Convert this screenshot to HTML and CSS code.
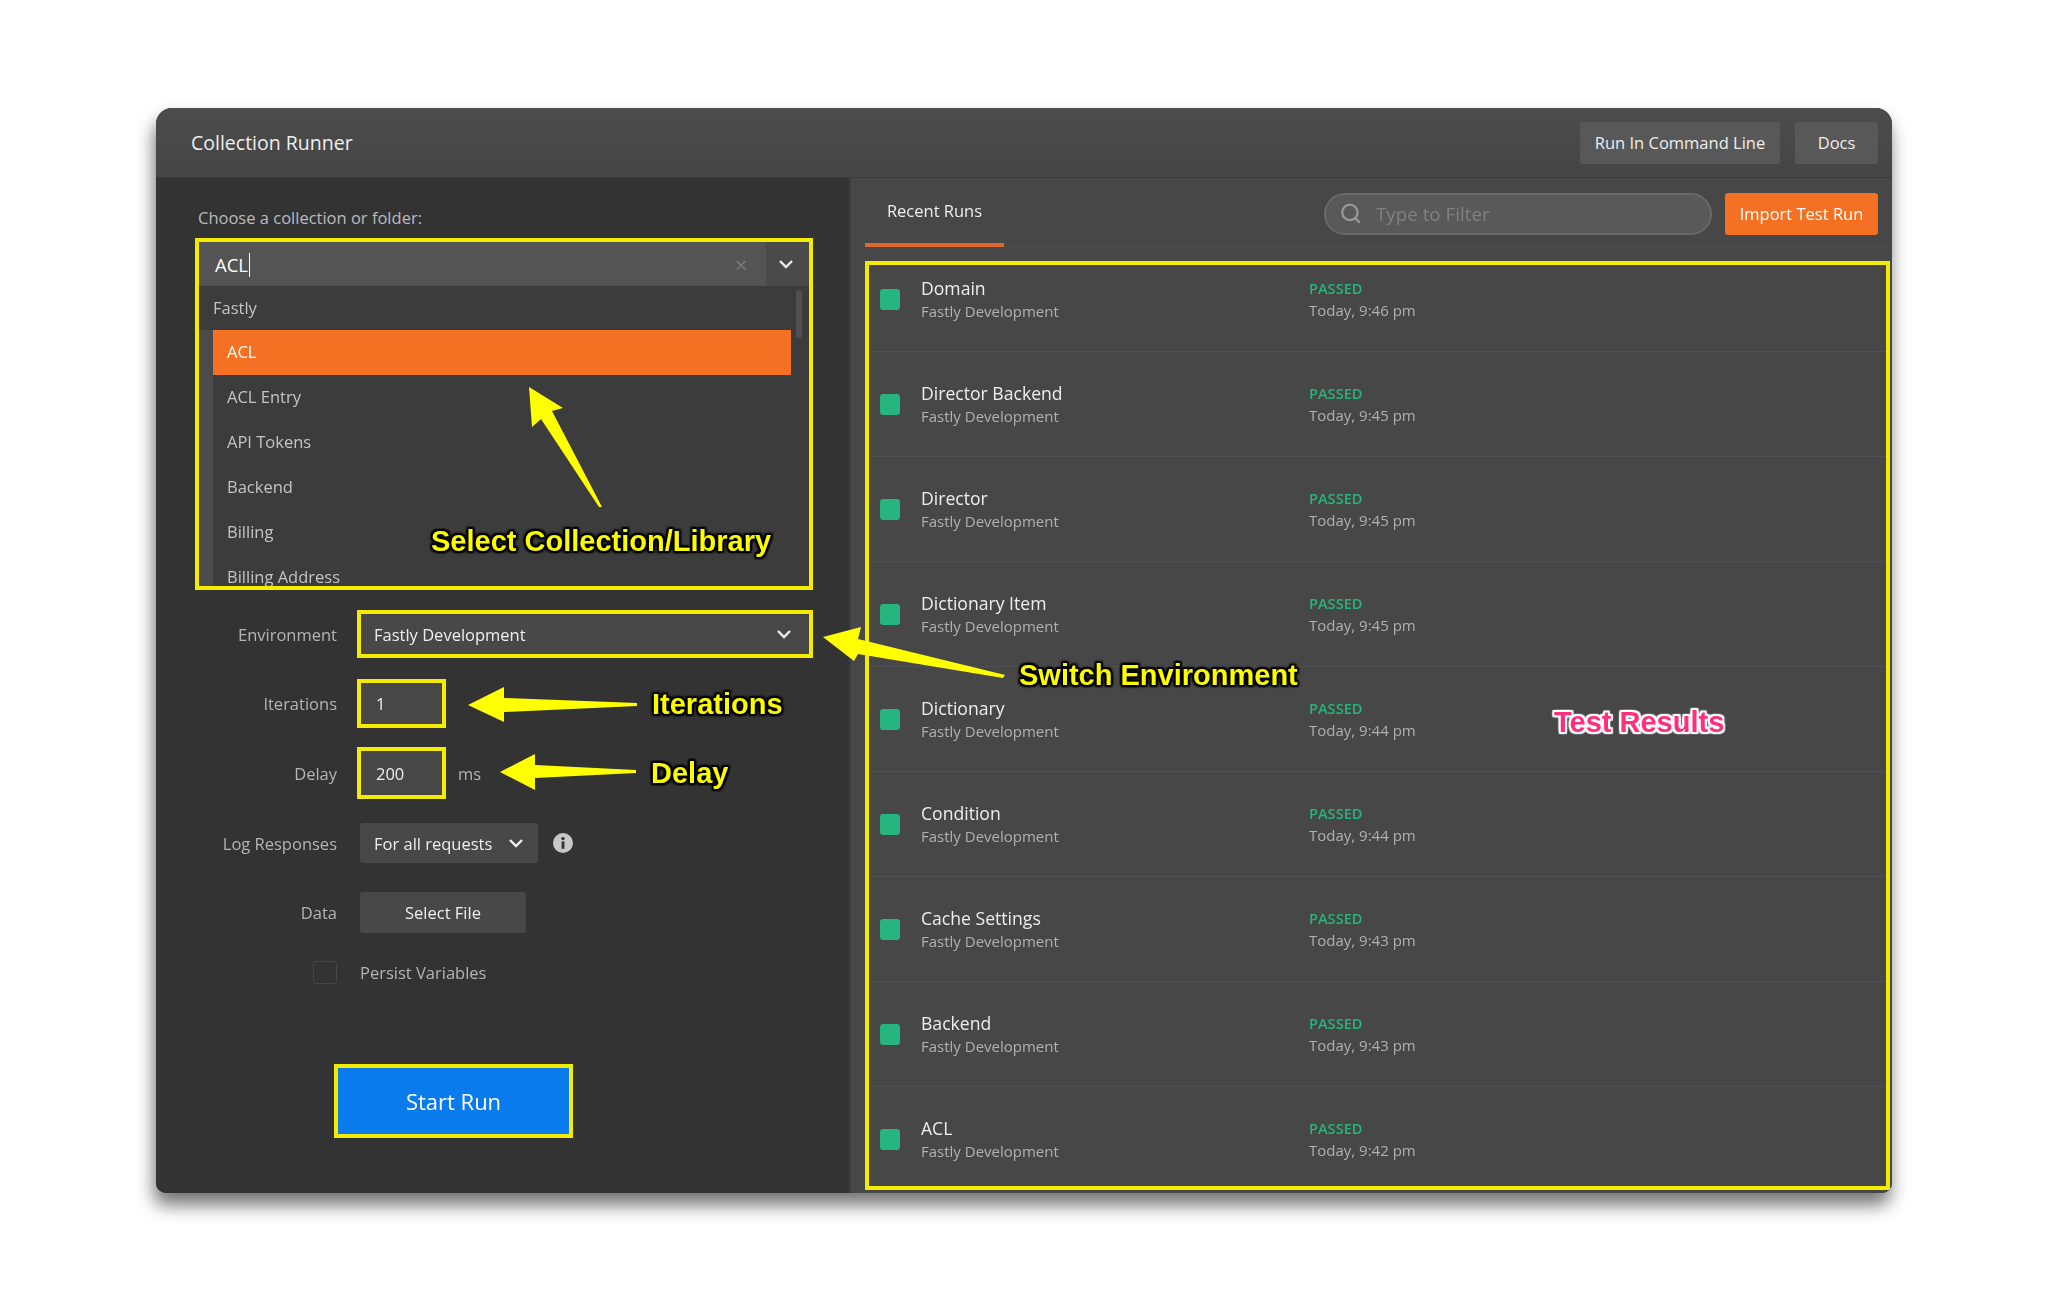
FILE: index.html
```html
<!DOCTYPE html>
<html lang="en">
<head>
    <meta charset="UTF-8">
    <meta name="viewport" content="width=device-width, initial-scale=1.0">
    <title>Collection Runner</title>
    <link rel="stylesheet" href="styles.css">
</head>
<body>

    <div class="window">
        <div class="titlebar">
            <span class="title">Collection Runner</span>
            <div class="title-actions">
                <button class="btn btn-cmd">Run In Command Line</button>
                <button class="btn btn-docs">Docs</button>
            </div>
        </div>

        <div class="panes">
            <div class="left-pane">
                <p class="choose-label">Choose a collection or folder:</p>

                <div class="picker hl">
                    <div class="picker-input">
                        <span class="picker-value">ACL</span>
                        <span class="picker-clear">&times;</span>
                        <span class="picker-toggle">
                            <svg class="chevron" viewBox="0 0 16 10"><path d="M2 2l6 6 6-6"/></svg>
                        </span>
                    </div>
                    <div class="picker-list">
                        <div class="picker-group">Fastly</div>
                        <div class="picker-items">
                            <div class="picker-item active">ACL</div>
                            <div class="picker-item">ACL Entry</div>
                            <div class="picker-item">API Tokens</div>
                            <div class="picker-item">Backend</div>
                            <div class="picker-item">Billing</div>
                            <div class="picker-item">Billing Address</div>
                        </div>
                        <div class="picker-scroll"></div>
                    </div>
                </div>

                <div class="form">
                    <div class="form-row row-env">
                        <label>Environment</label>
                        <div class="env-select hl">
                            <span>Fastly Development</span>
                            <svg class="chevron" viewBox="0 0 16 10"><path d="M2 2l6 6 6-6"/></svg>
                        </div>
                    </div>
                    <div class="form-row row-iter">
                        <label>Iterations</label>
                        <div class="num-input hl">1</div>
                    </div>
                    <div class="form-row row-delay">
                        <label>Delay</label>
                        <div class="num-input hl">200</div>
                        <span class="unit">ms</span>
                    </div>
                    <div class="form-row row-log">
                        <label>Log Responses</label>
                        <div class="log-select">
                            <span>For all requests</span>
                            <svg class="chevron" viewBox="0 0 16 10"><path d="M2 2l6 6 6-6"/></svg>
                        </div>
                        <svg class="info" viewBox="0 0 20 20">
                            <circle cx="10" cy="10" r="10" fill="#c8c8c8"/>
                            <rect x="8.6" y="8.4" width="2.8" height="7.4" fill="#333"/>
                            <circle cx="10" cy="5.6" r="1.7" fill="#333"/>
                        </svg>
                    </div>
                    <div class="form-row row-data">
                        <label>Data</label>
                        <button class="btn select-file">Select File</button>
                    </div>
                    <div class="form-row row-persist">
                        <label><span class="checkbox"></span></label>
                        <span class="persist-text">Persist Variables</span>
                    </div>
                </div>

                <button class="start-run">Start Run</button>
            </div>

            <div class="right-pane">
                <div class="tabs">
                    <div class="tab">Recent Runs</div>
                    <div class="filter">
                        <svg class="search" viewBox="0 0 20 20"><circle cx="9" cy="8.5" r="7"/><path d="M14 14l4 4"/></svg>
                        <span>Type to Filter</span>
                    </div>
                    <button class="btn btn-import">Import Test Run</button>
                </div>

                <div class="runs">
                    <div class="run">
                        <span class="status"></span>
                        <div class="run-name"><div class="name">Domain</div><div class="sub">Fastly Development</div></div>
                        <div class="run-result"><div class="passed">PASSED</div><div class="sub">Today, 9:46 pm</div></div>
                    </div>
                    <div class="run">
                        <span class="status"></span>
                        <div class="run-name"><div class="name">Director Backend</div><div class="sub">Fastly Development</div></div>
                        <div class="run-result"><div class="passed">PASSED</div><div class="sub">Today, 9:45 pm</div></div>
                    </div>
                    <div class="run">
                        <span class="status"></span>
                        <div class="run-name"><div class="name">Director</div><div class="sub">Fastly Development</div></div>
                        <div class="run-result"><div class="passed">PASSED</div><div class="sub">Today, 9:45 pm</div></div>
                    </div>
                    <div class="run">
                        <span class="status"></span>
                        <div class="run-name"><div class="name">Dictionary Item</div><div class="sub">Fastly Development</div></div>
                        <div class="run-result"><div class="passed">PASSED</div><div class="sub">Today, 9:45 pm</div></div>
                    </div>
                    <div class="run">
                        <span class="status"></span>
                        <div class="run-name"><div class="name">Dictionary</div><div class="sub">Fastly Development</div></div>
                        <div class="run-result"><div class="passed">PASSED</div><div class="sub">Today, 9:44 pm</div></div>
                    </div>
                    <div class="run">
                        <span class="status"></span>
                        <div class="run-name"><div class="name">Condition</div><div class="sub">Fastly Development</div></div>
                        <div class="run-result"><div class="passed">PASSED</div><div class="sub">Today, 9:44 pm</div></div>
                    </div>
                    <div class="run">
                        <span class="status"></span>
                        <div class="run-name"><div class="name">Cache Settings</div><div class="sub">Fastly Development</div></div>
                        <div class="run-result"><div class="passed">PASSED</div><div class="sub">Today, 9:43 pm</div></div>
                    </div>
                    <div class="run">
                        <span class="status"></span>
                        <div class="run-name"><div class="name">Backend</div><div class="sub">Fastly Development</div></div>
                        <div class="run-result"><div class="passed">PASSED</div><div class="sub">Today, 9:43 pm</div></div>
                    </div>
                    <div class="run">
                        <span class="status"></span>
                        <div class="run-name"><div class="name">ACL</div><div class="sub">Fastly Development</div></div>
                        <div class="run-result"><div class="passed">PASSED</div><div class="sub">Today, 9:42 pm</div></div>
                    </div>
                </div>
            </div>
        </div>
    </div>

    <!-- callouts drawn over the screenshot -->
    <svg class="arrows" viewBox="0 0 2048 1300">
        <path d="M529 387L563 408 552 411 602 507 599 507 541 419 532 427Z"/>
        <path d="M823 637L861 627 858 639 1005 675 1003 678 858 654 854 661Z"/>
        <path d="M468 705L504 687 504 698 637 703 637 706 504 712 504 722Z"/>
        <path d="M500 772L535 754 535 765 636 770 636 773 535 778 535 790Z"/>
    </svg>
    <span class="callout c-select">Select Collection/Library</span>
    <span class="callout c-env">Switch Environment</span>
    <span class="callout c-iter">Iterations</span>
    <span class="callout c-delay">Delay</span>
    <span class="callout c-results">Test Results</span>

</body>
</html>
```

FILE: styles.css
```css
* {
    box-sizing: border-box;
}

html, body {
    margin: 0;
    background-color: #fff;
}

body {
    position: relative;
    width: 2048px;
    height: 1300px;
    padding: 108px 156px 0 156px;
    font-family: 'Open Sans', 'Noto Sans', sans-serif;
    font-size: 16.5px;
    color: #ccc;
    overflow: hidden;
}

button {
    font-family: inherit;
    border: 0;
    padding: 0;
}

.window {
    display: flex;
    flex-direction: column;
    height: 1085px;
    border-radius: 16px 16px 10px 10px;
    overflow: hidden;
    background-color: #333;
    box-shadow: -2px 12px 18px rgba(0, 0, 0, 0.55);
    filter: blur(0.5px);
}

.titlebar {
    display: flex;
    align-items: center;
    justify-content: space-between;
    flex: 0 0 70px;
    padding: 0 14px 0 35px;
    background: linear-gradient(#4c4c4c, #454545);
    border-bottom: 1px solid #3c3c3c;
}

.title {
    font-size: 19.5px;
    color: #eee;
}

.title-actions {
    display: flex;
    gap: 15px;
}

.btn {
    height: 42px;
    border-radius: 3px;
    background-color: #585858;
    color: #eee;
    font-size: 16.5px;
}

.btn-cmd {
    width: 200px;
}

.btn-docs {
    width: 83px;
}

.panes {
    display: flex;
    flex: 1;
    min-height: 0;
}

/* left side */
.left-pane {
    flex: 0 0 693px;
    padding: 28px 0 0 39px;
    background-color: #333;
}

.choose-label {
    margin: 0 0 8px 3px;
    line-height: 24px;
    color: #bbb;
}

.hl {
    border: 4px solid #f3ec00;
}

.picker {
    width: 618px;
    height: 352px;
    background-color: #3c3c3c;
}

.picker-input {
    display: flex;
    align-items: center;
    height: 44px;
    background-color: #545454;
    color: #fff;
    font-size: 18.5px;
}

.picker-value {
    flex: 1;
    padding-left: 16px;
}

.picker-value::after {
    content: "";
    display: inline-block;
    width: 1px;
    height: 24px;
    margin-left: 1px;
    vertical-align: -5px;
    background-color: #fff;
}

.picker-clear {
    width: 20px;
    margin-right: 15px;
    color: #7a7a7a;
    font-size: 22px;
    text-align: center;
}

.picker-toggle {
    display: flex;
    align-items: center;
    justify-content: center;
    width: 43px;
    height: 44px;
    padding-right: 3px;
    background-color: #4a4a4a;
}

.chevron {
    width: 16px;
    height: 10px;
    fill: none;
    stroke: #f0f0f0;
    stroke-width: 2.4;
}

.picker-list {
    position: relative;
    height: 300px;
    overflow: hidden;
}

.picker-group {
    height: 44px;
    padding-left: 14px;
    line-height: 44px;
    color: #c4c4c4;
}

.picker-items {
    padding-left: 14px;
    padding-right: 18px;
    background: linear-gradient(90deg, #4b4b4b 14px, #3c3c3c 14px);
}

.picker-item {
    height: 45px;
    padding-left: 14px;
    line-height: 44px;
    color: #c4c4c4;
}

.picker-item.active {
    background-color: #f47023;
    color: #fff;
}

.picker-scroll {
    position: absolute;
    top: 4px;
    right: 7px;
    width: 6px;
    height: 48px;
    border-radius: 3px;
    background-color: #505050;
}

.form {
    margin: 20px 0 0 -39px;
}

.form-row {
    display: flex;
    align-items: center;
}

.form-row label {
    flex: 0 0 181px;
    margin-right: 20px;
    text-align: right;
    color: #b4b4b4;
}

.row-env { height: 48px; }
.row-iter { height: 49px; margin-top: 21px; }
.row-delay { height: 52px; margin-top: 19px; }
.row-log { height: 40px; margin-top: 24px; }
.row-data { height: 41px; margin-top: 29px; }
.row-persist { height: 24px; margin-top: 27px; }

.env-select {
    display: flex;
    align-items: center;
    justify-content: space-between;
    width: 456px;
    height: 48px;
    padding: 0 17px 0 13px;
    background-color: #484848;
    color: #eee;
}

.num-input {
    width: 89px;
    height: 100%;
    padding-left: 15px;
    display: flex;
    align-items: center;
    background-color: #474747;
    color: #eee;
}

.unit {
    margin-left: 12px;
    color: #b4b4b4;
}

.row-log label,
.row-data label,
.row-persist label {
    margin-right: 23px;
}

.log-select {
    display: flex;
    align-items: center;
    justify-content: space-between;
    width: 178px;
    height: 40px;
    padding: 0 14px;
    border-radius: 3px;
    background-color: #484848;
    color: #eee;
}

.info {
    width: 20px;
    height: 20px;
    margin-left: 15px;
}

.select-file {
    width: 166px;
    height: 41px;
    background-color: #484848;
}

.checkbox {
    display: block;
    width: 24px;
    height: 23px;
    margin-left: auto;
    border: 1px solid #474747;
    border-radius: 3px;
    background-color: #333;
}

.persist-text {
    color: #b4b4b4;
}

.start-run {
    display: block;
    width: 239px;
    height: 74px;
    margin: 80px 0 0 139px;
    border: 4px solid #f3ec00;
    background-color: #097bed;
    color: #fff;
    font-size: 22px;
}

/* right side */
.right-pane {
    flex: 1;
    min-width: 0;
    padding: 0 2px 0 14px;
    background-color: #474747;
    border-left: 2px solid #3d3d3d;
}

.tabs {
    display: flex;
    align-items: center;
    height: 69px;
    padding-right: 12px;
    border-bottom: 1px solid #4e4e4e;
}

.tab {
    align-self: stretch;
    width: 139px;
    padding-top: 21px;
    border-bottom: 4px solid #e0672a;
    text-align: center;
    color: #eee;
    margin-bottom: -1px;
}

.filter {
    display: flex;
    align-items: center;
    width: 388px;
    height: 42px;
    margin-left: auto;
    margin-top: 3px;
    padding-left: 14px;
    border: 2px solid #696969;
    border-radius: 21px;
    background-color: #595959;
    color: #808080;
    font-size: 18.8px;
}

.search {
    width: 22px;
    height: 22px;
    margin-right: 14px;
    fill: none;
    stroke: #999;
    stroke-width: 2;
}

.btn-import {
    width: 153px;
    margin-left: 13px;
    margin-top: 3px;
    background-color: #f47023;
    color: #fff;
}

.runs {
    height: 929px;
    margin-top: 14px;
    border: 4px solid #f3ec00;
    overflow: hidden;
}

.run {
    display: flex;
    height: 105px;
    padding: 29px 0 0 11px;
    border-bottom: 1px solid #505050;
}

.run:first-child {
    height: 87px;
    padding-top: 11px;
}

.status {
    flex: 0 0 20px;
    height: 21px;
    margin-top: 13px;
    border-radius: 3px;
    background-color: #26b47f;
}

.run-name {
    flex: 0 0 388px;
    margin-left: 21px;
}

.name {
    line-height: 25px;
    font-size: 17.6px;
    color: #eee;
}

.sub {
    line-height: 20px;
    font-size: 15px;
    color: #b0b0b0;
}

.passed {
    line-height: 24px;
    font-size: 14.6px;
    font-weight: 600;
    color: #26b47f;
}

/* callouts */
.arrows {
    position: absolute;
    top: 0;
    left: 0;
    width: 2048px;
    height: 1300px;
    fill: #ffff00;
    filter: blur(0.4px);
}

.callout {
    position: absolute;
    font-family: 'Liberation Sans', sans-serif;
    font-size: 29px;
    font-weight: 700;
    line-height: 34px;
    white-space: nowrap;
    color: #fcfc00;
    text-shadow: 2px 0 1px #000, -2px 0 1px #000, 0 2px 1px #000, 0 -2px 1px #000, 2px 2px 2px #000, -2px 2px 2px #000, 2px -2px 2px #000, -2px -2px 2px #000;
}

.c-select { left: 431px; top: 524px; }
.c-env { left: 1019px; top: 658px; }
.c-iter { left: 652px; top: 687px; }
.c-delay { left: 651px; top: 756px; }

.c-results {
    left: 1554px;
    top: 705px;
    color: #ff2f7d;
    text-shadow: 2px 0 1px #fff, -2px 0 1px #fff, 0 2px 1px #fff, 0 -2px 1px #fff, 2px 2px 1px #fff, -2px 2px 1px #fff, 2px -2px 1px #fff, -2px -2px 1px #fff;
}
```
